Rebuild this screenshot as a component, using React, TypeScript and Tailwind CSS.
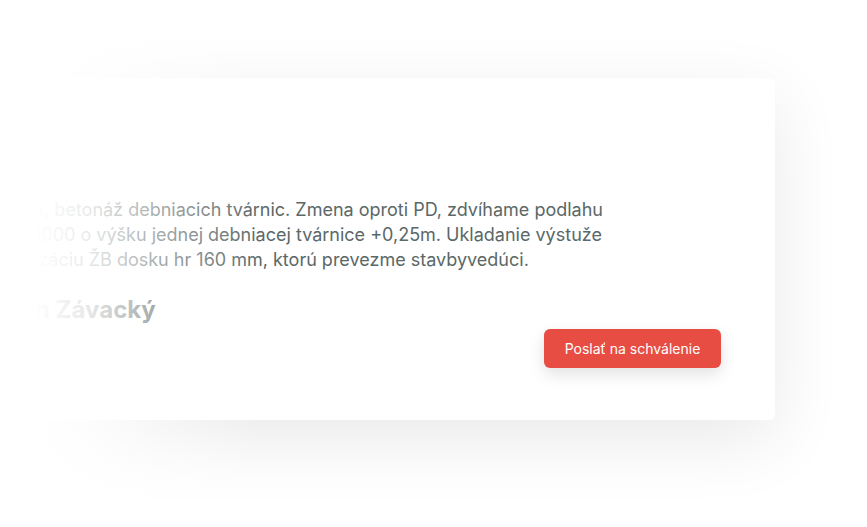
import React from 'react';

const lines = [
  { pre: 'a, ', text: 'betonáž debniacich tvárnic. Zmena oproti PD, zdvíhame podlahu' },
  { pre: '1000 ', text: 'o výšku jednej debniacej tvárnice +0,25m. Ukladanie výstuže' },
  { pre: 'izáciu ', text: 'ŽB dosku hr 160 mm, ktorú prevezme stavbyvedúci.' },
];

export default function App() {
  return (
    <div className="relative h-[527px] w-[867px] overflow-hidden bg-white font-['Inter','Liberation_Sans',sans-serif]">
      {/* Card */}
      <div className="mt-[78px] ml-[-40px] flex h-[342px] w-[815px] flex-col rounded-md bg-white shadow-[0_20px_70px_rgba(0,0,0,0.09)]">
        <div className="pt-[119px] pl-[74px] text-[18px] leading-[25px] text-[#5b6868]">
          {lines.map((l, i) => (
            <div key={i} className="whitespace-nowrap">
              {l.pre}
              {l.text}
            </div>
          ))}
        </div>

        <div className="mt-[22px] pl-[47px] text-[24px] font-bold leading-[32px] text-[#555c5c] whitespace-nowrap">
          Ján Závacký
        </div>

        <div className="mt-[3px] flex justify-end pr-[54px]">
          <button className="h-[39px] w-[177px] rounded-md bg-[#e74d43] text-[14px] text-white shadow-[0_6px_16px_rgba(0,0,0,0.12)]">
            Poslať na schválenie
          </button>
        </div>
      </div>

      {/* Left fade */}
      <div className="pointer-events-none absolute inset-y-0 left-0 w-[280px] bg-[linear-gradient(to_right,#ffffff_0px,#ffffff_35px,rgba(255,255,255,0.85)_90px,rgba(255,255,255,0.45)_160px,rgba(255,255,255,0)_260px)]" />
    </div>
  );
}
